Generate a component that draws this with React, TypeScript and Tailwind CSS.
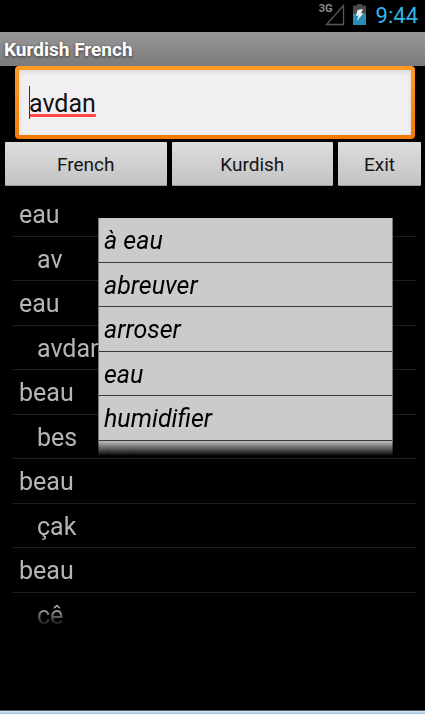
import React from 'react';

const ENTRIES = [
    { word: 'eau', translation: 'av' },
    { word: 'eau', translation: 'avdan' },
    { word: 'beau', translation: 'bes' },
    { word: 'beau', translation: 'çak' },
    { word: 'beau', translation: 'cê' },
];

const SUGGESTIONS = ['à eau', 'abreuver', 'arroser', 'eau', 'humidifier', 'irriguer'];

const StatusBar: React.FC = () => (
    <header className="flex h-8 items-center justify-end bg-black pr-[7px]">
        <span className="self-start pt-[3px] text-[11px] leading-3 font-bold text-[#8a8a8a]">3G</span>
        <svg className="-ml-2 h-8 w-5" viewBox="0 0 20 32" fill="none">
            <path d="M18.500 5.500V24.500H1.500Z" stroke="#585858" strokeWidth="1.300" />
        </svg>
        <svg className="ml-[7px] h-8 w-4" viewBox="0 0 16 32">
            <path d="M5 4h5v1.500h4V14H1V5.500h4z" fill="#4b4b4b" />
            <path d="M1 13.500h13V25H1z" fill="#2a8db5" />
            <path d="M5.500 10L11 9 9 13.500l2.500-.5L5 21l1.500-5.500L4 16z" fill="#eee" />
        </svg>
        <time className="ml-2 text-[22px] leading-8 text-[#33b5e5]">9:44</time>
    </header>
);

const SearchButton: React.FC<{ label: string; className?: string }> = ({ label, className }) => (
    <button
        type="button"
        className={`h-11 rounded-[1px] border-b border-[#9a9a9a] bg-linear-to-b from-[#dedede] to-[#c3c3c3] pt-[3px] text-[19px] text-[#151515] ${className}`}
    >
        {label}
    </button>
);

// Список подсказок, нижний край затухает
const SuggestionList: React.FC = () => (
    <ul className="absolute top-[26px] right-8 left-[98px] h-[238px] overflow-hidden border-x border-[#777] bg-[#cbcbcb] mask-[linear-gradient(to_bottom,black_calc(100%_-_16px),transparent)]">
        {SUGGESTIONS.map((item, index) => (
            <li
                key={item}
                className={`border-b border-[#3a3a3a] px-[5px] text-[25px] leading-[46px] text-black italic ${index % 2 ? 'h-11' : 'h-[45px]'}`}
            >
                {item}
            </li>
        ))}
    </ul>
);

export default function App() {
    return (
        <div className="flex min-h-screen flex-col bg-black font-['Roboto',sans-serif]">
            <StatusBar />

            <h1 className="h-[34px] bg-linear-to-b from-[#989898] to-[#7b7b7b] pl-1 text-[19px] leading-[36px] font-bold text-white [text-shadow:0_1px_3px_#333]">
                Kurdish French
            </h1>

            {/* Поле поиска */}
            <div className="relative mr-[10px] ml-[15px] rounded-[4px] bg-linear-to-b from-[#ff9a20] to-[#f57a00] p-1">
                <input
                    type="text"
                    aria-label="Search"
                    defaultValue="avdan"
                    spellCheck={false}
                    className="block h-[65px] w-full bg-[#f2eff3] px-[10px] pt-[2px] text-[25px] text-[#111] underline decoration-[#ff4a48] decoration-[3px] underline-offset-2 shadow-[inset_0_2px_5px_#d8d8d8] outline-none [text-decoration-skip-ink:none]"
                />
                <span className="absolute top-5 left-[14px] h-[33px] w-px bg-[#333]" />
            </div>

            <div className="mt-[3px] flex gap-[5px] pr-1 pl-[5px]">
                <SearchButton label="French" className="flex-1" />
                <SearchButton label="Kurdish" className="flex-1" />
                <SearchButton label="Exit" className="w-[83px]" />
            </div>

            <main className="relative mt-[6px] grow">
                <dl className="mr-[9px] ml-[13px] h-[435px] overflow-hidden text-[25px] leading-[46px] text-[#b5b5b5] mask-[linear-gradient(to_bottom,black_calc(100%_-_20px),transparent)]">
                    {ENTRIES.map((entry, index) => (
                        <div key={index}>
                            <dt className="h-[45px] border-b border-[#1e1e1e] pl-[6px]">{entry.word}</dt>
                            <dd className="h-11 border-b border-[#1e1e1e] pl-6">{entry.translation}</dd>
                        </div>
                    ))}
                </dl>
                <SuggestionList />
            </main>

            <footer className="h-1 border-t border-[#4d5b6b] bg-linear-to-b from-[#dbe8f6] to-[#9fbfe0]" />
        </div>
    );
}
